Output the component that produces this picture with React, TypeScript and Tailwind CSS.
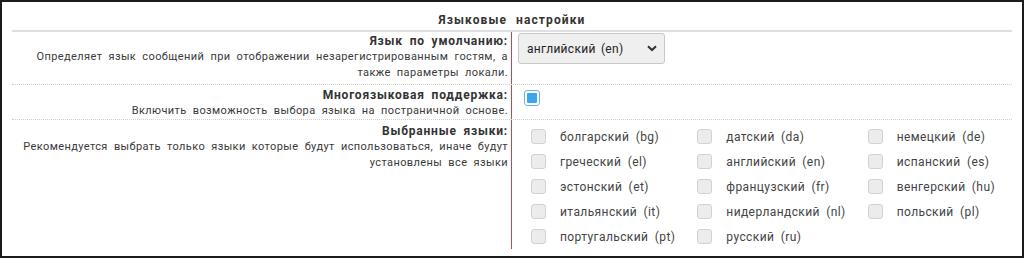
const languages = [
    ["болгарский (bg)", "датский (da)", "немецкий (de)"],
    ["греческий (el)", "английский (en)", "испанский (es)"],
    ["эстонский (et)", "французский (fr)", "венгерский (hu)"],
    ["итальянский (it)", "нидерландский (nl)", "польский (pl)"],
    ["португальский (pt)", "русский (ru)"],
];

const rowStyles = "grid grid-cols-2 border-b border-dotted border-[#cfcfcf]";
const leftCellStyles = "text-right pr-[3px] border-r border-[#cc4444]";
const labelStyles =
    "text-[12px] leading-[16px] font-bold text-[#333] tracking-[0.8px] [word-spacing:3px]";
const descStyles =
    "text-[11px] leading-[16px] text-[#3a3a3a] tracking-[0.4px] [word-spacing:3px]";

function Checkbox() {
    return (
        <span className="inline-block w-[15px] h-[15px] rounded-[3px] border border-[#d2d2d2] bg-[#ececec]" />
    );
}

export default function App() {
    return (
        <div
            className="w-[1024px] h-[258px] border-2 border-[#1c1c1c] bg-white px-[10px]"
            style={{ fontFamily: "Roboto, 'Liberation Sans', sans-serif" }}
        >
            <div className="pt-[10px] pb-[2px] border-b-2 border-[#dedee4] text-center text-[12px] leading-[16px] font-bold tracking-[1.1px] [word-spacing:5px] text-[#333]">
                Языковые настройки
            </div>

            {/* default language */}
            <div className={rowStyles}>
                <div className={`${leftCellStyles} pt-[1px] pb-[3px]`}>
                    <div className={labelStyles}>Язык по умолчанию:</div>
                    <div className={descStyles}>
                        Определяет язык сообщений при отображении незарегистрированным гостям, а
                        <br />
                        также параметры локали.
                    </div>
                </div>
                <div className="pl-[6px] pt-[1px]">
                    <div className="w-[147px] h-[31px] rounded-[3px] border border-[#c8c8c8] bg-[#efefef] flex items-center justify-between pl-[8px] pr-[7px]">
                        <span className="text-[12px] text-[#222] tracking-[0.3px] [word-spacing:2px]">
                            английский (en)
                        </span>
                        <svg width="10" height="7" viewBox="0 0 10 7">
                            <path d="M1 1.2 L5 5 L9 1.2" fill="none" stroke="#333" strokeWidth="2" />
                        </svg>
                    </div>
                </div>
            </div>

            {/* multilanguage */}
            <div className={rowStyles}>
                <div className={`${leftCellStyles} pt-[2px]`}>
                    <div className={labelStyles}>Многоязыковая поддержка:</div>
                    <div className={descStyles}>
                        Включить возможность выбора языка на постраничной основе.
                    </div>
                </div>
                <div className="pl-[12px] pt-[5px]">
                    <span className="flex items-center justify-center w-[16px] h-[16px] rounded-[3px] border border-[#6fb3e6] bg-white">
                        <span className="w-[10px] h-[10px] rounded-[1px] bg-[#3ca6e8]" />
                    </span>
                </div>
            </div>

            {/* selected languages */}
            <div className="grid grid-cols-2">
                <div className={`${leftCellStyles} pt-[3px] pb-[2px]`}>
                    <div className={labelStyles}>Выбранные языки:</div>
                    <div className={descStyles}>
                        Рекомендуется выбрать только языки которые будут использоваться, иначе будут
                        <br />
                        установлены все языки
                    </div>
                </div>
                <div className="pl-[19px] pt-[4px] grid grid-cols-[repeat(3,max-content)] gap-x-[22px]">
                    {languages.flat().map((lang) => (
                        <div key={lang} className="flex items-center h-[25px]">
                            <Checkbox />
                            <span className="ml-[14px] text-[12px] text-[#444] tracking-[0.4px] [word-spacing:3px]">
                                {lang}
                            </span>
                        </div>
                    ))}
                </div>
            </div>
        </div>
    );
}
